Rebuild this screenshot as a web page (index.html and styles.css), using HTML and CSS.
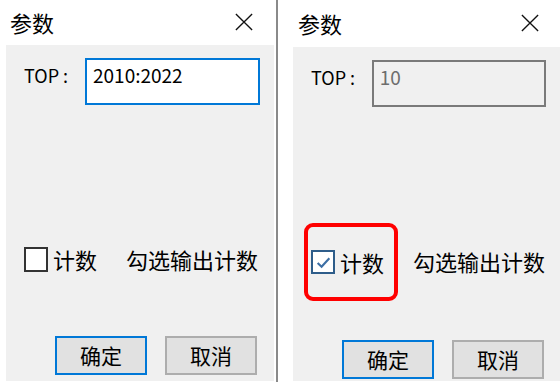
FILE: index.html
```html
<!DOCTYPE html>
<html lang="zh-CN">
<head>
<meta charset="UTF-8">
<link rel="stylesheet" href="styles.css">
<title>参数</title>
</head>
<body>
<div class="screen">

  <!-- Unchecked dialog -->
  <div class="dialog left">
    <div class="titlebar">
      <span class="title">参数</span>
      <svg class="close" viewBox="0 0 20 20"><path d="M1 1L19 19M19 1L1 19" /></svg>
    </div>
    <div class="content">
      <div class="field">
        <span class="label">TOP :</span>
        <div class="textbox active">2010:2022</div>
      </div>
      <div class="options">
        <label class="check"><span class="box"></span>计数</label>
        <span class="hint">勾选输出计数</span>
      </div>
      <div class="buttons">
        <button class="btn primary">确定</button>
        <button class="btn">取消</button>
      </div>
    </div>
  </div>

  <div class="divider"><span class="line"></span></div>

  <!-- Checked dialog -->
  <div class="dialog right">
    <div class="titlebar">
      <span class="title">参数</span>
      <svg class="close" viewBox="0 0 20 20"><path d="M1 1L19 19M19 1L1 19" /></svg>
    </div>
    <div class="content">
      <div class="field">
        <span class="label">TOP :</span>
        <div class="textbox disabled">10</div>
      </div>
      <div class="options">
        <div class="marker">
          <label class="check"><span class="box checked"><svg viewBox="0 0 16 16"><path d="M2.5 8.5L6.2 12L13.5 4" /></svg></span>计数</label>
        </div>
        <span class="hint">勾选输出计数</span>
      </div>
      <div class="buttons">
        <button class="btn primary">确定</button>
        <button class="btn">取消</button>
      </div>
    </div>
  </div>

</div>
</body>
</html>
```
FILE: styles.css
```css
body {
  margin: 0;
  background: #fff;
  font-family: "Noto Sans CJK SC", "Microsoft YaHei", sans-serif;
  color: #000;
}

.screen {
  display: flex;
  width: 560px;
  height: 382px;
  overflow: hidden;
}

.dialog {
  display: flex;
  flex-direction: column;
}

.dialog.left {
  width: 274px;
}

.dialog.right {
  width: 267px;
}

.titlebar {
  display: flex;
  align-items: center;
  justify-content: space-between;
  height: 45px;
  padding: 0 21px 0 10px;
  box-sizing: border-box;
}

.right .titlebar {
  height: 47px;
  padding: 0 21px 0 5px;
}

.title {
  font-size: 22px;
  line-height: 1;
  margin-top: -2px;
}

.close {
  width: 18px;
  height: 18px;
  margin-top: -2px;
}

.close path {
  stroke: #111;
  stroke-width: 1.5;
  fill: none;
}

.content {
  background: #f0f0f0;
  height: 336px;
  display: flex;
  flex-direction: column;
  padding: 13px 14px 0 18px;
  box-sizing: border-box;
}

.left .content {
  margin-left: 6px;
}

.right .content {
  height: 334px;
  padding: 13px 14px 0 18px;
}

.field {
  display: flex;
  align-items: flex-start;
  height: 47px;
}

.label {
  width: 61px;
  font-size: 18px;
  line-height: 20px;
  padding-top: 7px;
}

.textbox {
  width: 175px;
  height: 47px;
  box-sizing: border-box;
  padding: 3px 6px;
  font-size: 19px;
  line-height: 24px;
}

.textbox.active {
  background: #fff;
  border: 2px solid #0078d7;
}

.textbox.disabled {
  border: 2px solid #7a7a7a;
  color: #6d6d6d;
}

.options {
  display: flex;
  align-items: center;
  margin-top: 141px;
  height: 26px;
  font-size: 22px;
}

.check {
  display: flex;
  align-items: center;
  gap: 5px;
  width: 102px;
}

.box {
  width: 24px;
  height: 25px;
  box-sizing: border-box;
  border: 2px solid #333;
  background: #fff;
  display: flex;
  align-items: center;
  justify-content: center;
}

.box.checked {
  border-color: #2e5d8a;
  width: 24px;
  height: 24px;
}

.box svg {
  width: 17px;
  height: 17px;
}

.box path {
  stroke: #3c6fa5;
  stroke-width: 2;
  fill: none;
}

.marker {
  width: 94px;
  display: flex;
  align-items: center;
  height: 78px;
  margin-left: -7px;
  border: 4px solid #ff0000;
  border-radius: 9px;
  box-sizing: border-box;
  padding-left: 3px;
  margin-top: 2px;
}

.marker .check {
  width: auto;
}

.hint {
  white-space: nowrap;
}

.right .hint {
  margin-left: 15px;
}

.buttons {
  display: flex;
  gap: 18px;
  margin-top: 64px;
  padding-left: 31px;
}

.right .buttons {
  margin-top: 66px;
  padding-left: 31px;
}

.btn {
  width: 92px;
  height: 39px;
  background: #e1e1e1;
  border: 2px solid #adadad;
  font-family: inherit;
  font-size: 21px;
  color: #000;
  padding: 0;
  line-height: 1;
}

.btn.primary {
  border-color: #0078d7;
}

.divider {
  width: 19px;
  display: flex;
  padding-left: 2px;
  box-sizing: border-box;
}

.divider .line {
  width: 2px;
  height: 100%;
  background: #8a8a8a;
}
```
